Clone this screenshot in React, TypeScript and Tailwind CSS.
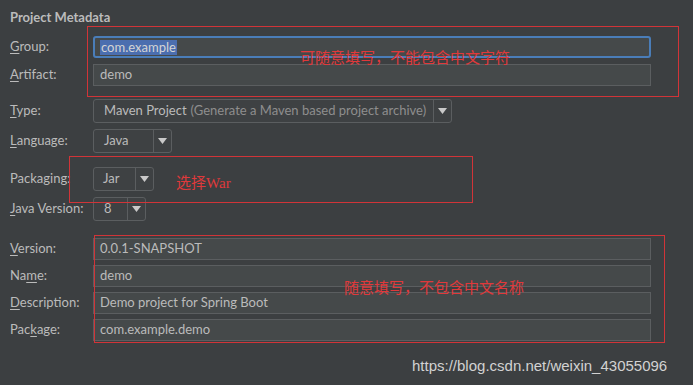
import React from 'react';

const labelFont = { fontFamily: 'Lato, "Noto Sans", sans-serif' };

const Arrow: React.FC = () => (
  <svg width="9" height="6" viewBox="0 0 9 6">
    <path d="M0 0 H9 L4.5 6 Z" fill="#c9c9c9" />
  </svg>
);

// label with one underlined mnemonic letter
const Label: React.FC<{ pre: string; key_?: string; post: string }> = ({ pre, key_, post }) => (
  <div className="w-[93px] shrink-0 pl-[10px] text-[13px] text-[#bbbbbb] whitespace-nowrap" style={labelFont}>
    {pre}
    {key_ && <span className="underline underline-offset-2">{key_}</span>}
    {post}
  </div>
);

const TextField: React.FC<{ value: string; focused?: boolean }> = ({ value, focused }) => (
  <div
    className={`w-[558px] h-[22px] flex items-center text-[13px] text-[#bbbbbb] bg-[#45494a] ${
      focused ? 'border-2 border-[#4a7db8] rounded-[3px] px-[5px]' : 'border border-[#5b5e60] px-[6px]'
    }`}
    style={labelFont}
  >
    {focused ? <span className="bg-[#4b6eaf] text-[#d4d4d4] px-[1px] leading-[15px]">{value}</span> : value}
  </div>
);

const Combo: React.FC<{ width: string; children: React.ReactNode }> = ({ width, children }) => (
  <div className={`${width} h-[24px] flex border border-[#5b5e60] rounded-[3px] bg-[#3e4143]`}>
    <div className="flex-1 flex items-center pl-[10px] text-[13px] text-[#bbbbbb] whitespace-nowrap overflow-hidden" style={labelFont}>
      {children}
    </div>
    <div className="w-[18px] border-l border-[#5b5e60] flex items-center justify-center">
      <Arrow />
    </div>
  </div>
);

const redText = { fontFamily: '"Noto Sans CJK SC", "Liberation Serif", serif' };

export default function App() {
  return (
    <div className="relative w-[693px] h-[385px] bg-[#3c3f41] overflow-hidden">
      <div className="flex flex-col">
        <div className="pt-[9px] pl-[10px] text-[13px] font-bold text-[#bbbbbb] leading-[16px]" style={labelFont}>
          Project Metadata
        </div>

        <div className="flex items-center mt-[11px]">
          <Label pre="" key_="G" post="roup:" />
          <TextField value="com.example" focused />
        </div>
        <div className="flex items-center mt-[6px]">
          <Label pre="" key_="A" post="rtifact:" />
          <TextField value="demo" />
        </div>

        <div className="flex items-center mt-[13px]">
          <Label pre="" key_="T" post="ype:" />
          <Combo width="w-[359px]">
            Maven Project<span className="text-[#8e8e8e] ml-[4px]">(Generate a Maven based project archive)</span>
          </Combo>
        </div>
        <div className="flex items-center mt-[6px]">
          <Label pre="" key_="L" post="anguage:" />
          <Combo width="w-[79px]">Java</Combo>
        </div>
        <div className="flex items-center mt-[14px]">
          <Label pre="Packaging:" post="" />
          <Combo width="w-[61px]">
            <span className="-ml-[1px]">Jar</span>
          </Combo>
        </div>
        <div className="flex items-center mt-[6px]">
          <Label pre="" key_="J" post="ava Version:" />
          <Combo width="w-[53px]">8</Combo>
        </div>

        <div className="flex items-center mt-[17px]">
          <Label pre="" key_="V" post="ersion:" />
          <TextField value="0.0.1-SNAPSHOT" />
        </div>
        <div className="flex items-center mt-[5px]">
          <Label pre="Na" key_="m" post="e:" />
          <TextField value="demo" />
        </div>
        <div className="flex items-center mt-[5px]">
          <Label pre="" key_="D" post="escription:" />
          <TextField value="Demo project for Spring Boot" />
        </div>
        <div className="flex items-center mt-[5px]">
          <Label pre="Pac" key_="k" post="age:" />
          <TextField value="com.example.demo" />
        </div>
      </div>

      {/* red annotations drawn over the form */}
      <div className="absolute left-[87px] top-[26px] w-[592px] h-[71px] border border-[#d13438]" />
      <div className="absolute left-[300px] top-[47px] text-[15px] leading-[20px] text-[#e0393b]" style={redText}>
        可随意填写，不能包含中文字符
      </div>

      <div className="absolute left-[69px] top-[156px] w-[404px] h-[47px] border border-[#d13438]" />
      <div className="absolute left-[176px] top-[172px] text-[15px] leading-[20px] text-[#e0393b]" style={redText}>
        选择<span style={{ fontFamily: '"Liberation Serif", serif' }}>War</span>
      </div>

      <div className="absolute left-[94px] top-[235px] w-[571px] h-[108px] border border-[#d13438]" />
      <div className="absolute left-[344px] top-[277px] text-[15px] leading-[20px] text-[#e0393b]" style={redText}>
        随意填写，不包含中文名称
      </div>

      <div
        className="absolute left-[412px] top-[356px] text-[15px] leading-[20px] text-[#d2d2d2]"
        style={{ fontFamily: '"Liberation Sans", Arial, sans-serif' }}
      >
        https://blog.csdn.net/weixin_43055096
      </div>
    </div>
  );
}
